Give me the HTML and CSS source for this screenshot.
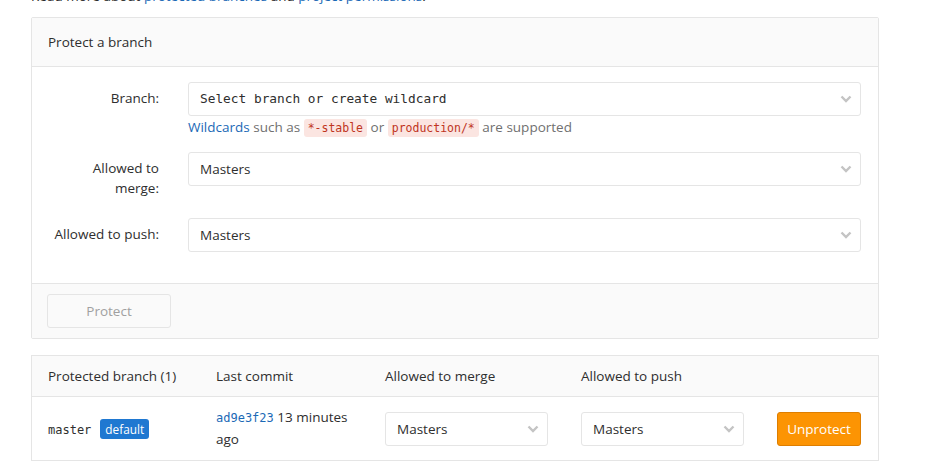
FILE: index.html
```html
<!DOCTYPE html>
<html>
<head>
<meta charset="utf-8">
<link rel="stylesheet" href="styles.css">
</head>
<body>
<div class="page">
  <p class="intro">Read more about <a href="#">protected branches</a> and <a href="#">project permissions</a>.</p>

  <div class="card">
    <div class="card-header">Protect a branch</div>
    <div class="card-body">
      <div class="form-group">
        <label class="form-label">Branch:</label>
        <div class="form-field">
          <div class="select mono-select">
            <span>Select branch or create wildcard</span>
            <svg class="chev" width="12" height="8" viewBox="0 0 12 8"><polyline points="1.5,1.5 6,6 10.5,1.5" fill="none" stroke="#c4c4c4" stroke-width="2.4"/></svg>
          </div>
          <div class="hint"><a href="#">Wildcards</a> such as <code>*-stable</code> or <code>production/*</code> are supported</div>
        </div>
      </div>
      <div class="form-group">
        <label class="form-label two-line">Allowed to merge:</label>
        <div class="form-field">
          <div class="select">
            <span>Masters</span>
            <svg class="chev" width="12" height="8" viewBox="0 0 12 8"><polyline points="1.5,1.5 6,6 10.5,1.5" fill="none" stroke="#c4c4c4" stroke-width="2.4"/></svg>
          </div>
        </div>
      </div>
      <div class="form-group">
        <label class="form-label">Allowed to push:</label>
        <div class="form-field">
          <div class="select">
            <span>Masters</span>
            <svg class="chev" width="12" height="8" viewBox="0 0 12 8"><polyline points="1.5,1.5 6,6 10.5,1.5" fill="none" stroke="#c4c4c4" stroke-width="2.4"/></svg>
          </div>
        </div>
      </div>
    </div>
    <div class="card-footer">
      <button class="btn btn-disabled">Protect</button>
    </div>
  </div>

  <div class="table">
    <div class="thead">
      <div class="cell">Protected branch (1)</div>
      <div class="cell">Last commit</div>
      <div class="cell">Allowed to merge</div>
      <div class="cell">Allowed to push</div>
      <div class="cell"></div>
    </div>
    <div class="trow">
      <div class="cell"><code class="branch">master</code><span class="badge">default</span></div>
      <div class="cell commit"><a href="#" class="sha">ad9e3f23</a> 13 minutes ago</div>
      <div class="cell">
        <div class="select small">
          <span>Masters</span>
          <svg class="chev" width="12" height="8" viewBox="0 0 12 8"><polyline points="1.5,1.5 6,6 10.5,1.5" fill="none" stroke="#c4c4c4" stroke-width="2.4"/></svg>
        </div>
      </div>
      <div class="cell">
        <div class="select small">
          <span>Masters</span>
          <svg class="chev" width="12" height="8" viewBox="0 0 12 8"><polyline points="1.5,1.5 6,6 10.5,1.5" fill="none" stroke="#c4c4c4" stroke-width="2.4"/></svg>
        </div>
      </div>
      <div class="cell"><button class="btn btn-warning">Unprotect</button></div>
    </div>
  </div>
</div>
</body>
</html>
```
FILE: styles.css
```css
* { box-sizing: border-box; }
body {
  margin: 0;
  background: #fff;
  font-family: "Open Sans", "Noto Sans", sans-serif;
  font-size: 13.5px;
  color: #2e2e2e;
  line-height: 20px;
}
a { color: #1b69b6; text-decoration: none; }
.page {
  width: 848px;
  margin-left: 31px;
}
.intro {
  margin: -14px 0 0 0;
  line-height: 20px;
}
.card {
  margin-top: 11px;
  border: 1px solid #e5e5e5;
  border-radius: 2px;
}
.card-header {
  background: #fafafa;
  border-bottom: 1px solid #e5e5e5;
  padding: 14px 16px;
  line-height: 20px;
}
.card-body {
  padding: 15px 17px 15px 0;
}
.form-group {
  display: flex;
  margin-bottom: 16px;
}
.form-label {
  width: 127px;
  text-align: right;
  padding: 6px 0 4px;
  line-height: 20px;
}
.form-label.two-line { padding-left: 50px; }
.form-field {
  flex: 1;
  margin-left: 29px;
}
.select {
  height: 34px;
  border: 1px solid #e5e5e5;
  border-radius: 3px;
  display: flex;
  align-items: center;
  justify-content: space-between;
  padding: 0 8px 0 11px;
  background: #fff;
}
.mono-select span {
  font-family: "DejaVu Sans Mono", monospace;
  font-size: 12.8px;
}
.chev { display: block; }
.hint {
  color: #707070;
  line-height: 20px;
  height: 20px;
  margin-top: 1px;
  margin-bottom: -1px;
}
code {
  font-family: "DejaVu Sans Mono", monospace;
  font-size: 11.5px;
  line-height: 16px;
  color: #c0341d;
  background: #fbe5e1;
  padding: 2px 4px;
  border-radius: 3px;
}
.card-footer {
  background: #fafafa;
  border-top: 1px solid #e5e5e5;
  padding: 10px 15px;
}
.btn {
  font-family: inherit;
  font-size: 13.5px;
  height: 34px;
  border-radius: 3px;
  line-height: 20px;
  padding: 6px 10px;
}
.btn-disabled {
  width: 124px;
  background: #fafafa;
  border: 1px solid #e5e5e5;
  color: #a0a0a0;
}
.table {
  margin-top: 16px;
  border: 1px solid #e5e5e5;
}
.thead, .trow {
  display: grid;
  grid-template-columns: 168px 169px 196px 196px 1fr;
}
.thead {
  background: #fafafa;
  border-bottom: 1px solid #e5e5e5;
  height: 41px;
  align-items: center;
}
.thead .cell { padding: 0 16px; }
.trow {
  align-items: center;
  min-height: 62px;
}
.trow .cell { padding: 10px 16px; }
.trow .cell:last-child { padding-right: 17px; }
.branch {
  background: none;
  color: #2e2e2e;
  padding: 0;
  font-size: 12px;
}
.badge {
  display: inline-block;
  background: #1f78d1;
  color: #fff;
  border-radius: 3px;
  padding: 0 5px;
  line-height: 20px;
  font-size: 11.8px;
  margin-left: 9px;
}
.commit { line-height: 21px; }
.sha {
  font-family: "DejaVu Sans Mono", monospace;
  font-size: 12px;
  color: #1b69b6;
}
.select.small {
  height: 34px;
  width: 163px;
}
.btn-warning {
  width: 84px;
  background: #fc9403;
  border: 1px solid #de7e00;
  color: #fff;
  padding: 6px 0;
}
```
